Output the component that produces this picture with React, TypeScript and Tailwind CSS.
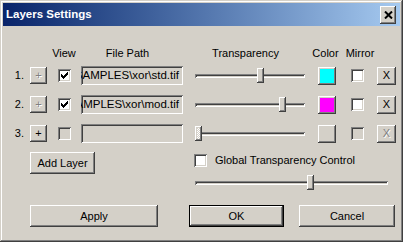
import React from "react";

// classic win2000 bevels
const raised =
  "shadow-[inset_-1px_-1px_#404040,inset_1px_1px_#ffffff,inset_-2px_-2px_#808080,inset_2px_2px_#d4d0c8]";
const sunken =
  "shadow-[inset_1px_1px_#808080,inset_-1px_-1px_#ffffff,inset_2px_2px_#404040,inset_-2px_-2px_#d4d0c8]";
const dither =
  "bg-[repeating-conic-gradient(#ffffff_0_25%,#d4d0c8_0_50%)] bg-[length:2px_2px]";
const disabledText = "text-[#808080] [text-shadow:1px_1px_#ffffff]";

const layers = [
  { n: 1, view: true, path: "C:\\Program Files\\SAMPLES\\xor\\std.tif", pos: 62, color: "bg-[#00ffff]", enabled: true },
  { n: 2, view: true, path: "C:\\Program Files\\SAMPLES\\xor\\mod.tif", pos: 84, color: "bg-[#ff00ff]", enabled: true },
  { n: 3, view: false, path: "", pos: 0, color: "", enabled: false },
];

const CheckBox = ({ checked = false, disabled = false }: { checked?: boolean; disabled?: boolean }) => (
  <div
    className={`w-[13px] h-[13px] flex items-center justify-center ${sunken} ${
      disabled ? "bg-[#d4d0c8]" : "bg-white"
    }`}
  >
    {checked && (
      <svg width="7" height="7" viewBox="0 0 7 7">
        {[2, 3, 4, 3, 2, 1, 0].map((y, i) => (
          <rect key={i} x={i} y={y} width="1" height="3" fill="#000" />
        ))}
      </svg>
    )}
  </div>
);

const Slider = ({ pos, disabled = false, className }: { pos: number; disabled?: boolean; className: string }) => (
  <div className={`relative h-[15px] flex items-center ${className}`}>
    <div className={`w-full h-[4px] ${sunken}`} />
    <div
      className={`absolute top-0 w-[7px] h-[15px] ${raised} ${disabled ? dither : "bg-[#d4d0c8]"}`}
      style={{ left: pos }}
    />
  </div>
);

const Button = ({ children, className = "" }: { children: React.ReactNode; className?: string }) => (
  <div className={`h-[22px] flex items-center justify-center bg-[#d4d0c8] ${raised} ${className}`}>
    {children}
  </div>
);

export default function App() {
  return (
    <div className="w-[403px] h-[242px] bg-[#d4d0c8] p-[3px] flex flex-col font-['Liberation_Sans',Arial,sans-serif] text-[11px] leading-[13px] text-black shadow-[inset_-1px_-1px_#404040,inset_1px_1px_#d4d0c8,inset_-2px_-2px_#808080,inset_2px_2px_#ffffff]">
      {/* Title bar */}
      <div className="h-[23px] shrink-0 flex items-center justify-between pl-[3px] pr-[4px] bg-gradient-to-r from-[#0a246a] to-[#a6caf0]">
        <span className="text-white font-bold text-[11.5px]">Layers Settings</span>
        <div className={`w-[16px] h-[18px] flex items-center justify-center bg-[#d4d0c8] ${raised}`}>
          <svg width="9" height="8" viewBox="0 0 9 8">
            <path d="M1 0.5 L8 7.5 M8 0.5 L1 7.5" stroke="#000" strokeWidth="2" />
          </svg>
        </div>
      </div>

      {/* Column headers */}
      <div className="flex mt-[21px] h-[13px]">
        <span className="ml-[41px] w-[40px] text-center">View</span>
        <span className="w-[87px] text-center">File Path</span>
        <span className="ml-[29px] w-[91px] text-center">Transparency</span>
        <span className="ml-[19px] w-[31px] text-center">Color</span>
        <span className="w-[38px] text-center">Mirror</span>
      </div>

      {/* Layer rows */}
      <div className="mt-[6px] pl-[9px] grid grid-cols-[18px_28px_23px_112px_125px_33px_26px_19px] auto-rows-[19px] gap-y-[10px] items-center">
        {layers.map((l) => (
          <React.Fragment key={l.n}>
            <span className="text-right pr-[6px]">{l.n}.</span>
            <Button className="!w-[17px] !h-[17px]">
              <span className={l.enabled ? disabledText : ""}>+</span>
            </Button>
            <CheckBox checked={l.view} disabled={!l.enabled} />
            <div className={`w-[102px] h-[19px] flex items-center justify-end overflow-hidden pr-[4px] text-[11.5px] ${sunken}`}>
              <span className="shrink-0 whitespace-nowrap">{l.path}</span>
            </div>
            <Slider pos={l.pos} disabled={!l.enabled} className="ml-[2px] w-[110px]" />
            <div className={`w-[18px] h-[18px] bg-[#d4d0c8] ${raised}`}>
              {l.enabled && <div className={`w-full h-full ${l.color} ${raised}`} />}
            </div>
            <CheckBox disabled={!l.enabled} />
            <Button className="!w-[19px] !h-[18px]">
              <span className={l.enabled ? "" : disabledText}>X</span>
            </Button>
          </React.Fragment>
        ))}
      </div>

      {/* Add layer + global control */}
      <div className="flex mt-[9px] pl-[27px]">
        <Button className="w-[65px]">Add Layer</Button>
        <div className="ml-[99px] flex flex-col">
          <div className="mt-[2px] flex items-center">
            <CheckBox />
            <span className="ml-[8px]">Global Transparency Control</span>
          </div>
          <Slider pos={112} className="mt-[8px] ml-[1px] w-[193px]" />
        </div>
      </div>

      {/* Dialog buttons */}
      <div className="flex mt-[15px] pl-[27px]">
        <Button className="w-[128px]">Apply</Button>
        <Button className="ml-[31px] w-[95px] border border-black">OK</Button>
        <Button className="ml-[15px] w-[96px]">Cancel</Button>
      </div>
    </div>
  );
}
